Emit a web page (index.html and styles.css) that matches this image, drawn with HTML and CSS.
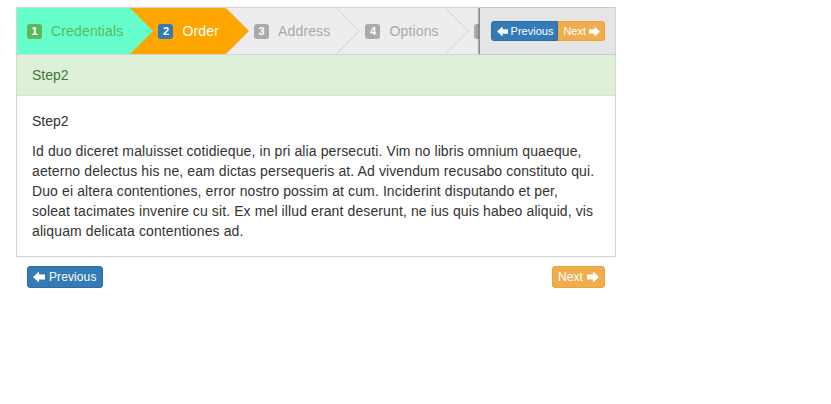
FILE: index.html
```html
<!DOCTYPE html>
<html>
<head>
<meta charset="utf-8">
<link rel="stylesheet" href="styles.css">
</head>
<body>
<div class="page">
  <div class="wizard">
    <div class="steps-container">
      <ul class="steps">
        <li class="step complete"><span class="badge">1</span>Credentials</li>
        <li class="step active"><span class="badge">2</span>Order</li>
        <li class="step"><span class="badge">3</span>Address</li>
        <li class="step"><span class="badge">4</span>Options</li>
        <li class="step"><span class="badge">5</span></li>
      </ul>
      <div class="actions">
        <div class="btn-group">
          <button class="btn btn-mini btn-primary grp-left"><svg class="ico ico-s" viewBox="0 0 12 12"><polygon points="0,6 6,0.5 6,3.5 12,3.5 12,8.5 6,8.5 6,11.5"/></svg>Previous</button>
          <button class="btn btn-mini btn-warning grp-right">Next<svg class="ico ico-s ico-r" viewBox="0 0 12 12"><polygon points="12,6 6,0.5 6,3.5 0,3.5 0,8.5 6,8.5 6,11.5"/></svg></button>
        </div>
      </div>
    </div>
    <div class="heading">Step2</div>
    <div class="body">
      <div class="title">Step2</div>
      <p class="text">Id duo diceret maluisset cotidieque, in pri alia persecuti. Vim no libris omnium quaeque, aeterno delectus his ne, eam dictas persequeris at. Ad vivendum recusabo constituto qui. Duo ei altera contentiones, error nostro possim at cum. Inciderint disputando et per, soleat tacimates invenire cu sit. Ex mel illud erant deserunt, ne ius quis habeo aliquid, vis aliquam delicata contentiones ad.</p>
    </div>
  </div>
  <div class="pager">
    <button class="btn btn-xs btn-primary"><svg class="ico" viewBox="0 0 12 12"><polygon points="0,6 6,0.5 6,3.5 12,3.5 12,8.5 6,8.5 6,11.5"/></svg>Previous</button>
    <button class="btn btn-xs btn-warning">Next<svg class="ico ico-r" viewBox="0 0 12 12"><polygon points="12,6 6,0.5 6,3.5 0,3.5 0,8.5 6,8.5 6,11.5"/></svg></button>
  </div>
</div>
</body>
</html>
```

FILE: styles.css
```css
* { box-sizing: border-box; }
html, body { margin: 0; padding: 0; background: #fff; }
body {
  font-family: "Liberation Sans", Arial, sans-serif;
  font-size: 14px;
  line-height: 20px;
  color: #333;
}
.page {
  padding: 7px 0 0 16px;
  width: 616px;
}
.wizard {
  width: 600px;
  border: 1px solid #d4d4d4;
  background: #fff;
}
.steps-container {
  display: flex;
  height: 47px;
  border-bottom: 1px solid #d4d4d4;
  background: #ededed;
}
.steps {
  list-style: none;
  margin: 0;
  padding: 0;
  display: flex;
  flex-wrap: nowrap;
  flex: 1 1 auto;
  min-width: 0;
  overflow: hidden;
  height: 46px;
}
.step {
  position: relative;
  flex: none;
  height: 46px;
  line-height: 46px;
  padding: 0 6px 0 29px;
  font-size: 14px;
  letter-spacing: 0.15px;
  color: #aaa;
  background: #ededed;
  white-space: nowrap;
}
.step:first-child { padding-left: 10px; }
.step::before,
.step::after {
  content: "";
  position: absolute;
  top: 0;
  width: 0;
  height: 0;
  border-top: 23px solid transparent;
  border-bottom: 23px solid transparent;
  border-left: 23px solid #cfcfcf;
  z-index: 2;
}
.step::before { right: -24px; }
.step::after { right: -23px; border-left-color: #ededed; z-index: 3; }
.step .badge {
  display: inline-block;
  width: 15px;
  height: 15px;
  line-height: 15px;
  margin-right: 9px;
  border-radius: 3px;
  background: #aaa;
  color: #fff;
  font-size: 11px;
  font-weight: bold;
  letter-spacing: 0;
  text-align: center;
  position: relative;
  top: -1px;
}
.step.complete { background: #66ffcc; color: #5cb85c; }
.step.complete::before { border-left-color: #66ffcc; }
.step.complete::after { border-left-color: #66ffcc; }
.step.complete .badge { background: #5cb85c; }
.step.active { background: #ffa500; color: #fff; }
.step.active::before { border-left-color: #ffa500; }
.step.active::after { border-left-color: #ffa500; }
.step.active .badge { background: #337ab7; }

.actions {
  flex: none;
  height: 46px;
  display: flex;
  align-items: center;
  padding: 0 10px 0 11px;
  background: #e5e5e5;
  border-left: 1px solid #8c8c8c;
  box-shadow: -1px 0 1px rgba(0,0,0,0.25);
  position: relative;
  z-index: 5;
}
.btn-group { display: flex; }

.btn {
  display: inline-flex;
  align-items: center;
  font-family: "Liberation Sans", Arial, sans-serif;
  color: #fff;
  border: 1px solid transparent;
  cursor: pointer;
  margin: 0;
  letter-spacing: 0.1px;
}
.btn-primary { background: #337ab7; border-color: #2e6da4; }
.btn-warning { background: #f0ad4e; border-color: #eea236; }
.btn-xs {
  font-size: 12px;
  line-height: 18px;
  padding: 1px 5px;
  border-radius: 3px;
}
.btn-mini {
  font-size: 11px;
  line-height: 16px;
  padding: 1px 4px 1px 5px;
  letter-spacing: 0;
}
.grp-left { border-radius: 3px 0 0 3px; padding-right: 4px; }
.grp-right { border-radius: 0 3px 3px 0; border-left-width: 0; }

.ico {
  width: 12px;
  height: 12px;
  fill: #fff;
  margin-right: 4px;
  flex: none;
}
.ico-s { width: 11px; height: 11px; margin-right: 3px; }
.ico-r { margin-right: 0; margin-left: 4px; }
.ico-s.ico-r { margin-left: 3px; }

.heading {
  height: 41px;
  padding: 10px 15px;
  background: #dff0d8;
  color: #3c763d;
  border-bottom: 1px solid #d6e9c6;
}
.body {
  padding: 15px;
}
.title { line-height: 20px; }
.text {
  margin: 10px 0 0 0;
  letter-spacing: 0.11px;
}

.pager {
  display: flex;
  justify-content: space-between;
  margin-top: 9px;
  width: 600px;
  padding: 0 11px 0 11px;
}
```
